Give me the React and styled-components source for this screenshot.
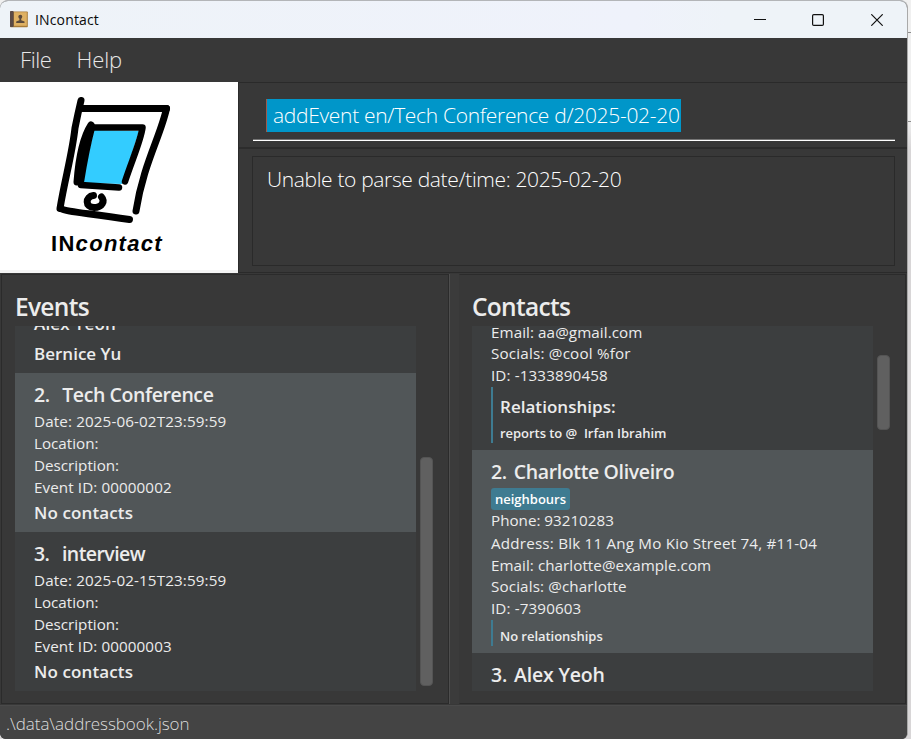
import React from "react";
import styled, { createGlobalStyle } from "styled-components";

const GlobalStyle = createGlobalStyle`
  *, *::before, *::after { box-sizing: border-box; }
  body {
    margin: 0;
    overflow: hidden;
    background: #d9d7d8;
    font-family: "Open Sans", "Noto Sans", sans-serif;
  }
`;

const Desktop = styled.div`
  display: flex;
  width: 911px;
  height: 739px;
  background: linear-gradient(#f0f0f0 0 120px, #d8d6d7 150px);
`;

const Edge = styled.div`
  flex: 1;
  margin-top: 32px;
  height: 90px;
  border-top: 1px solid #8c8c8c;
  border-bottom: 1px solid #8c8c8c;
`;

const Window = styled.div`
  display: flex;
  flex-direction: column;
  width: 908px;
  height: 739px;
  border-top: 1px solid #b3b5b8;
  border-right: 1px solid #a9a9a9;
  border-radius: 8px 8px 6px 6px;
  overflow: hidden;
  background: #383838;
`;

const TitleBar = styled.header`
  display: flex;
  flex: none;
  align-items: center;
  height: 37px;
  padding-left: 10px;
  background: linear-gradient(90deg, #eef3f8, #eff2fb 70%, #eef3f8 80%);
`;

const AppName = styled.span`
  flex: 1;
  margin-left: 7px;
  font-size: 14px;
  line-height: 20px;
  letter-spacing: 0.15px;
  color: #0a0a0a;
`;

const WindowButton = styled.button`
  display: grid;
  place-items: center;
  width: ${(p) => p.$width}px;
  height: 37px;
  padding: 0;
  border: 0;
  background: none;
`;

const MenuBar = styled.nav`
  display: flex;
  flex: none;
  gap: 25px;
  height: 44px;
  padding: 0 20px;
  background: #383838;
`;

const Menu = styled.span`
  font-size: 22px;
  font-weight: 300;
  line-height: 43px;
  letter-spacing: ${(p) => p.$spacing || 0}px;
  color: #e8e8e8;
`;

const Top = styled.section`
  display: flex;
  flex: none;
  height: 191px;
`;

const LogoPane = styled.div`
  display: flex;
  flex-direction: column;
  width: 238px;
  background: #fff;
  border-bottom: 3px solid #f3f3f3;
`;

const LogoText = styled.div`
  margin: -1px 0 0 51px;
  font: 700 22px/28px "Liberation Sans", Arial, sans-serif;
  letter-spacing: 1.3px;
  white-space: nowrap;
  color: #000;
`;

const Console = styled.div`
  display: flex;
  flex: 1;
  flex-direction: column;
  border-left: 1px solid #2b2b2b;
`;

const CommandArea = styled.div`
  height: 67px;
  padding: 16px 12px 0 14px;
  border-top: 1px solid #2a2a2a;
  border-bottom: 2px solid #2c2c2c;
`;

const CommandField = styled.div`
  display: flex;
  height: 42px;
  padding-left: 13px;
  border-bottom: 1px solid #fff;
  box-shadow: inset 0 -1px 0 #757575;
`;

const Selection = styled.span`
  width: 415px;
  height: 33px;
  padding-left: 6px;
  border-left: 1px solid #a05a4c;
  background: #0096c9;
  font-size: 21px;
  font-weight: 300;
  line-height: 32px;
  letter-spacing: -0.31px;
  white-space: nowrap;
  color: #fff;
`;

const ResultArea = styled.div`
  flex: 1;
  padding: 7px 12px 6px 13px;
  border-bottom: 1px solid #2a2a2a;
`;

const ResultBox = styled.div`
  height: 110px;
  padding: 6px 14px;
  border: 1px solid #2a2a2a;
  font-size: 21px;
  font-weight: 300;
  line-height: 32px;
  letter-spacing: -0.35px;
  color: #fff;
`;

const Split = styled.main`
  display: flex;
  flex: none;
  height: 432px;
  padding: 1px;
`;

const Divider = styled.div`
  width: 10px;
  border-left: 1px solid #4e4e4e;
  background: #3b3b3b;
`;

const Panel = styled.section`
  display: flex;
  flex-direction: column;
  width: ${(p) => p.$width}px;
  height: 430px;
  padding-left: ${(p) => p.$inset}px;
  border: 1px solid #2b2b2b;
  border-left-color: ${(p) => (p.$first ? "#2b2b2b" : "#383838")};
`;

const PanelTitle = styled.h1`
  margin: 13px 0 0;
  font-size: 24.5px;
  font-weight: 600;
  line-height: 38px;
  letter-spacing: -0.7px;
  color: #ececec;
`;

const ListArea = styled.div`
  display: flex;
  gap: 4px;
`;

const List = styled.div`
  width: 401px;
  height: 365px;
  overflow: hidden;
  background: #3c3e3f;
`;

const Track = styled.div`
  width: 13px;
  padding-top: ${(p) => p.$offset}px;
`;

const Thumb = styled.div`
  height: ${(p) => p.$length}px;
  border: 1px solid #545454;
  border-radius: 4px;
  background: #606060;
`;

const Card = styled.article`
  display: flex;
  flex-direction: column;
  height: ${(p) => p.$height}px;
  margin-top: ${(p) => -(p.$scrolled || 0)}px;
  padding: ${(p) => (p.$scrolled ? 0 : 8)}px 0 0 19px;
  background: ${(p) => (p.$alt ? "#515658" : "#3c3e3f")};
  white-space: pre;
  color: #ececec;
`;

const Name = styled.h2`
  display: flex;
  gap: ${(p) => p.$gap}px;
  margin: 0;
  font-size: 19.5px;
  font-weight: 600;
  line-height: 28px;
  letter-spacing: ${(p) => p.$spacing}px;
`;

const Details = styled.div`
  margin-top: ${(p) => p.$top || 0}px;
`;

const Field = styled.div`
  height: ${(p) => p.$height || 22}px;
  font-size: 15.2px;
  line-height: ${(p) => p.$height || 22}px;
  letter-spacing: ${(p) => p.$spacing ?? 0.13}px;
`;

const Strong = styled.div`
  font-size: 17px;
  font-weight: 600;
  line-height: ${(p) => p.$height}px;
  letter-spacing: ${(p) => p.$spacing || 0}px;
`;

const Tag = styled.span`
  align-self: flex-start;
  height: 22px;
  margin-top: 2px;
  padding: 0 4px;
  border-radius: 3px;
  background: #3e7b91;
  font-size: 13px;
  font-weight: 600;
  line-height: 22px;
  color: #fff;
`;

const Relations = styled.div`
  height: ${(p) => p.$height}px;
  margin-top: ${(p) => p.$top}px;
  padding: ${(p) => p.$pad}px 0 0 7px;
  border-left: 2.5px solid #3e7b91;
`;

const Relation = styled.div`
  font-size: 13px;
  font-weight: 600;
  line-height: ${(p) => p.$height || 22}px;
  letter-spacing: -0.04px;
`;

const StatusBar = styled.footer`
  flex: none;
  height: 34px;
  padding-left: 6px;
  border-top: 1px solid #4a4a4a;
  background: #444;
  font-size: 17px;
  font-weight: 300;
  line-height: 35px;
  letter-spacing: -0.05px;
  color: #dcdcdc;
`;

function BookIcon() {
  return (
    <svg width="18" height="17" viewBox="0 0 18 17">
      <rect x="0" y="0.5" width="17.800" height="15.800" rx="0.800" fill="#a87b38" />
      <rect x="4" y="1.200" width="12.800" height="13.600" fill="#dfb163" />
      <rect x="0" y="0" width="3.600" height="16" rx="0.800" fill="#5a4a46" />
      <circle cx="10.300" cy="5.800" r="2" fill="#5b4a3c" />
      <path d="M9.400 7h1.800v2.200l3.300 1.400v1.500H6.200v-1.500l3.200-1.400z" fill="#5b4a3c" />
    </svg>
  );
}

function DeviceDrawing() {
  return (
    <svg width="238" height="149" viewBox="0 82 238 149" fill="none" stroke="#000" strokeLinecap="round" strokeLinejoin="round">
      <path d="M94 130 L139 131 L122 184 L82 183 Z" fill="#33ccff" stroke="none" />
      <path d="M81 100.500 Q78 113 75 128 C72 155 65 178 60 208.500" strokeWidth="7" />
      <path d="M82 108.500H166.500" strokeWidth="7" />
      <path d="M166.500 108.500 C161 135 143 165 136 211" strokeWidth="7" />
      <path d="M61 208.500 C66 212 84 212.500 129.500 219.500" strokeWidth="7" />
      <path d="M91 125 Q80 142 77 182" strokeWidth="7" />
      <path d="M92 127 Q86 150 81 181" strokeWidth="6.500" />
      <path d="M92 127.500 H142.500 C141 140 132 160 125 181.500" strokeWidth="6.500" />
      <path d="M81 185 L119 187.500" strokeWidth="6.500" />
      <path d="M93.500 195.500 C85 196.500 85 207.500 94 207.500 C102.500 207.500 105 201 101.500 197" strokeWidth="7" />
    </svg>
  );
}

function EventCard({ index, title, spacing, date, id, alt }) {
  return (
    <Card $height={159} $alt={alt}>
      <Name $gap={12.5} $spacing={spacing}>
        <span>{index}.</span>
        <span>{title}</span>
      </Name>
      <Details $top={1}>
        <Field>Date: {date}</Field>
        <Field $spacing={0}>Location:</Field>
        <Field $spacing={0}>Description:</Field>
        <Field $spacing={0.1}>Event ID: {id}</Field>
      </Details>
      <Strong $height={30} $spacing={0.12}>No contacts</Strong>
    </Card>
  );
}

export default function App() {
  return (
    <Desktop>
      <GlobalStyle />
      <Window>
        <TitleBar>
          <BookIcon />
          <AppName>INcontact</AppName>
          <WindowButton $width={58}>
            <svg width="12" height="12" stroke="#111" fill="none"><path d="M0 5.500H12" /></svg>
          </WindowButton>
          <WindowButton $width={58}>
            <svg width="12" height="12" stroke="#111" fill="none"><rect x="0.600" y="0.600" width="10.800" height="10.800" rx="1.200" strokeWidth="1.200" /></svg>
          </WindowButton>
          <WindowButton $width={60}>
            <svg width="12" height="12" stroke="#111" fill="none"><path d="M0.300 0.300L11.700 11.700M11.700 0.300L0.300 11.700" strokeWidth="1.200" /></svg>
          </WindowButton>
        </TitleBar>
        <MenuBar>
          <Menu $spacing={-0.4}>File</Menu>
          <Menu $spacing={-0.1}>Help</Menu>
        </MenuBar>
        <Top>
          <LogoPane>
            <DeviceDrawing />
            <LogoText>IN<i>contact</i></LogoText>
          </LogoPane>
          <Console>
            <CommandArea>
              <CommandField>
                <Selection>addEvent en/Tech Conference d/2025-02-20</Selection>
              </CommandField>
            </CommandArea>
            <ResultArea>
              <ResultBox>Unable to parse date/time: 2025-02-20</ResultBox>
            </ResultArea>
          </Console>
        </Top>
        <Split>
          <Panel $width={448} $inset={13} $first>
            <PanelTitle>Events</PanelTitle>
            <ListArea>
              <List>
                <Card $height={64} $scrolled={17}>
                  <Strong $height={30} $spacing={0.15}>Alex Yeoh</Strong>
                  <Strong $height={30}>Bernice Yu</Strong>
                </Card>
                <EventCard index={2} title="Tech Conference" spacing={-0.4} date="2025-06-02T23:59:59" id="00000002" alt />
                <EventCard index={3} title="interview" spacing={-0.55} date="2025-02-15T23:59:59" id="00000003" />
              </List>
              <Track $offset={131}><Thumb $length={229} /></Track>
            </ListArea>
          </Panel>
          <Divider />
          <Panel $width={447} $inset={12}>
            <PanelTitle>Contacts</PanelTitle>
            <ListArea>
              <List>
                <Card $height={129} $scrolled={5}>
                  <Field $spacing={0.08}>Email: aa@gmail.com</Field>
                  <Field $height={20} $spacing={0.2}>Socials: @cool %for</Field>
                  <Field $height={24}>ID: -1333890458</Field>
                  <Relations $top={0} $height={56} $pad={6}>
                    <Strong $height={28} $spacing={0.03}>Relationships:</Strong>
                    <Relation $height={24}>reports to @  Irfan Ibrahim</Relation>
                  </Relations>
                </Card>
                <Card $height={203} $alt>
                  <Name $gap={7} $spacing={-0.37}><span>2.</span><span>Charlotte Oliveiro</span></Name>
                  <Tag>neighbours</Tag>
                  <Details $top={-1}>
                    <Field $spacing={0}>Phone: 93210283</Field>
                    <Field $height={24} $spacing={0.2}>Address: Blk 11 Ang Mo Kio Street 74, #11-04</Field>
                    <Field $height={20} $spacing={0.05}>Email: charlotte@example.com</Field>
                    <Field>Socials: @charlotte</Field>
                    <Field>ID: -7390603</Field>
                  </Details>
                  <Relations $top={1} $height={26} $pad={5}>
                    <Relation>No relationships</Relation>
                  </Relations>
                </Card>
                <Card $height={60}>
                  <Name $gap={7} $spacing={-0.2}><span>3.</span><span>Alex Yeoh</span></Name>
                </Card>
              </List>
              <Track $offset={29}><Thumb $length={75} /></Track>
            </ListArea>
          </Panel>
        </Split>
        <StatusBar>.\data\addressbook.json</StatusBar>
      </Window>
      <Edge />
    </Desktop>
  );
}
